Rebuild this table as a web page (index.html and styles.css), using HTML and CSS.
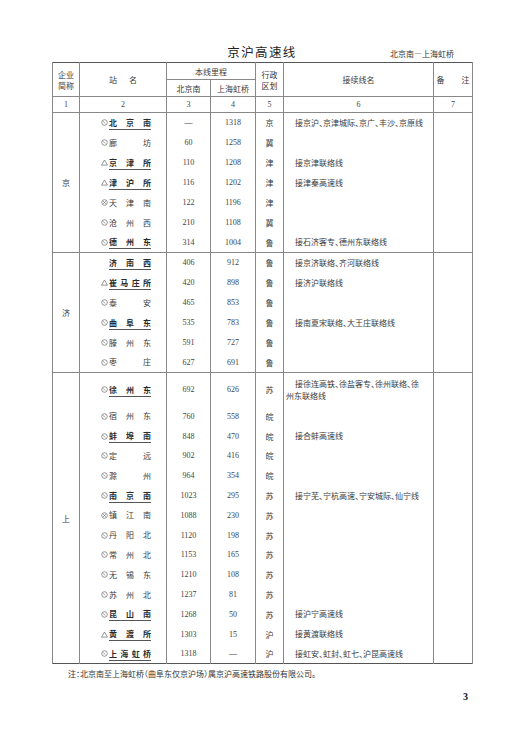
FILE: index.html
```html
<!DOCTYPE html>
<html lang="zh-CN">
<head>
<meta charset="utf-8">
<title>京沪高速线</title>
<link rel="stylesheet" href="styles.css">
</head>
<body>
<svg class="defs" width="0" height="0" aria-hidden="true">
  <symbol id="cs" viewBox="0 0 8 8"><circle cx="4" cy="4" r="3.2" fill="none" stroke="#555" stroke-width=".7"/><path d="M2.3 2.6 L4.7 5.1" stroke="#555" stroke-width=".7" fill="none"/></symbol>
  <symbol id="cx" viewBox="0 0 8 8"><circle cx="4" cy="4" r="3.2" fill="none" stroke="#555" stroke-width=".7"/><path d="M2.4 2.4 L5.6 5.6 M5.6 2.4 L2.4 5.6" stroke="#555" stroke-width=".6" fill="none"/></symbol>
  <symbol id="tr" viewBox="0 0 8 8"><path d="M4 1.2 L7.4 7 H0.6 Z" fill="none" stroke="#555" stroke-width=".7"/></symbol>
</svg>
<div class="page">
  <div class="head">
    <h1 class="title">京沪高速线</h1>
    <div class="sub">北京南—上海虹桥</div>
  </div>
  <table class="tt">
    <colgroup>
      <col class="c1"><col class="c2"><col class="c3"><col class="c4"><col class="c5"><col class="c6"><col class="c7">
    </colgroup>
    <thead>
      <tr class="h1">
        <th rowspan="2" class="two">企业<br>简称</th>
        <th rowspan="2"><span class="zh">站</span>名</th>
        <th colspan="2">本线里程</th>
        <th rowspan="2" class="two">行政<br>区划</th>
        <th rowspan="2">接续线名</th>
        <th rowspan="2"><span class="bz">备</span>注</th>
      </tr>
      <tr class="h2"><th>北京南</th><th>上海虹桥</th></tr>
      <tr class="h3"><td class="n">1</td><td class="n">2</td><td class="n">3</td><td class="n">4</td><td class="n">5</td><td class="n">6</td><td class="n">7</td></tr>
    </thead>
    <tbody class="grp">
      <tr>
        <td rowspan="7" class="co">京</td>
        <td><div class="sw"><svg class="sym"><use href="#cs"/></svg><span class="nm b"><i>北</i><i>京</i><i>南</i></span></div></td>
        <td class="n">—</td><td class="n">1318</td><td class="pr">京</td>
        <td class="ln">接京沪、京津城际、京广、丰沙、京原线</td>
        <td rowspan="7"></td>
      </tr>
      <tr><td><div class="sw"><svg class="sym"><use href="#cs"/></svg><span class="nm"><i>廊</i><i>坊</i></span></div></td><td class="n">60</td><td class="n">1258</td><td class="pr">冀</td><td class="ln"></td></tr>
      <tr><td><div class="sw"><svg class="sym"><use href="#tr"/></svg><span class="nm b"><i>京</i><i>津</i><i>所</i></span></div></td><td class="n">110</td><td class="n">1208</td><td class="pr">津</td><td class="ln">接京津联络线</td></tr>
      <tr><td><div class="sw"><svg class="sym"><use href="#tr"/></svg><span class="nm b"><i>津</i><i>沪</i><i>所</i></span></div></td><td class="n">116</td><td class="n">1202</td><td class="pr">津</td><td class="ln">接津秦高速线</td></tr>
      <tr><td><div class="sw"><svg class="sym"><use href="#cx"/></svg><span class="nm"><i>天</i><i>津</i><i>南</i></span></div></td><td class="n">122</td><td class="n">1196</td><td class="pr">津</td><td class="ln"></td></tr>
      <tr><td><div class="sw"><svg class="sym"><use href="#cs"/></svg><span class="nm"><i>沧</i><i>州</i><i>西</i></span></div></td><td class="n">210</td><td class="n">1108</td><td class="pr">冀</td><td class="ln"></td></tr>
      <tr><td><div class="sw"><svg class="sym"><use href="#cs"/></svg><span class="nm b"><i>德</i><i>州</i><i>东</i></span></div></td><td class="n">314</td><td class="n">1004</td><td class="pr">鲁</td><td class="ln">接石济客专、德州东联络线</td></tr>
    </tbody>
    <tbody class="grp">
      <tr>
        <td rowspan="6" class="co">济</td>
        <td><div class="sw"><span class="sym"></span><span class="nm b"><i>济</i><i>南</i><i>西</i></span></div></td>
        <td class="n">406</td><td class="n">912</td><td class="pr">鲁</td>
        <td class="ln">接京济联络、齐河联络线</td>
        <td rowspan="6"></td>
      </tr>
      <tr><td><div class="sw"><svg class="sym"><use href="#tr"/></svg><span class="nm b"><i>崔</i><i>马</i><i>庄</i><i>所</i></span></div></td><td class="n">420</td><td class="n">898</td><td class="pr">鲁</td><td class="ln">接济沪联络线</td></tr>
      <tr><td><div class="sw"><svg class="sym"><use href="#cs"/></svg><span class="nm"><i>泰</i><i>安</i></span></div></td><td class="n">465</td><td class="n">853</td><td class="pr">鲁</td><td class="ln"></td></tr>
      <tr><td><div class="sw"><svg class="sym"><use href="#cs"/></svg><span class="nm b"><i>曲</i><i>阜</i><i>东</i></span></div></td><td class="n">535</td><td class="n">783</td><td class="pr">鲁</td><td class="ln">接南夏宋联络、大王庄联络线</td></tr>
      <tr><td><div class="sw"><svg class="sym"><use href="#cs"/></svg><span class="nm"><i>滕</i><i>州</i><i>东</i></span></div></td><td class="n">591</td><td class="n">727</td><td class="pr">鲁</td><td class="ln"></td></tr>
      <tr><td><div class="sw"><svg class="sym"><use href="#cs"/></svg><span class="nm"><i>枣</i><i>庄</i></span></div></td><td class="n">627</td><td class="n">691</td><td class="pr">鲁</td><td class="ln"></td></tr>
    </tbody>
    <tbody class="grp g3">
      <tr class="tall">
        <td rowspan="14" class="co">上</td>
        <td><div class="sw"><svg class="sym"><use href="#cs"/></svg><span class="nm b"><i>徐</i><i>州</i><i>东</i></span></div></td>
        <td class="n">692</td><td class="n">626</td><td class="pr">苏</td>
        <td class="ln">接徐连高铁、徐盐客专、徐州联络、徐<br>州东联络线</td>
        <td rowspan="14"></td>
      </tr>
      <tr><td><div class="sw"><svg class="sym"><use href="#cs"/></svg><span class="nm"><i>宿</i><i>州</i><i>东</i></span></div></td><td class="n">760</td><td class="n">558</td><td class="pr">皖</td><td class="ln"></td></tr>
      <tr><td><div class="sw"><svg class="sym"><use href="#cs"/></svg><span class="nm b"><i>蚌</i><i>埠</i><i>南</i></span></div></td><td class="n">848</td><td class="n">470</td><td class="pr">皖</td><td class="ln">接合蚌高速线</td></tr>
      <tr><td><div class="sw"><svg class="sym"><use href="#cs"/></svg><span class="nm"><i>定</i><i>远</i></span></div></td><td class="n">902</td><td class="n">416</td><td class="pr">皖</td><td class="ln"></td></tr>
      <tr><td><div class="sw"><svg class="sym"><use href="#cs"/></svg><span class="nm"><i>滁</i><i>州</i></span></div></td><td class="n">964</td><td class="n">354</td><td class="pr">皖</td><td class="ln"></td></tr>
      <tr><td><div class="sw"><svg class="sym"><use href="#cs"/></svg><span class="nm b"><i>南</i><i>京</i><i>南</i></span></div></td><td class="n">1023</td><td class="n">295</td><td class="pr">苏</td><td class="ln">接宁芜、宁杭高速、宁安城际、仙宁线</td></tr>
      <tr><td><div class="sw"><svg class="sym"><use href="#cx"/></svg><span class="nm"><i>镇</i><i>江</i><i>南</i></span></div></td><td class="n">1088</td><td class="n">230</td><td class="pr">苏</td><td class="ln"></td></tr>
      <tr><td><div class="sw"><svg class="sym"><use href="#cs"/></svg><span class="nm"><i>丹</i><i>阳</i><i>北</i></span></div></td><td class="n">1120</td><td class="n">198</td><td class="pr">苏</td><td class="ln"></td></tr>
      <tr><td><div class="sw"><svg class="sym"><use href="#cs"/></svg><span class="nm"><i>常</i><i>州</i><i>北</i></span></div></td><td class="n">1153</td><td class="n">165</td><td class="pr">苏</td><td class="ln"></td></tr>
      <tr><td><div class="sw"><svg class="sym"><use href="#cs"/></svg><span class="nm"><i>无</i><i>锡</i><i>东</i></span></div></td><td class="n">1210</td><td class="n">108</td><td class="pr">苏</td><td class="ln"></td></tr>
      <tr><td><div class="sw"><svg class="sym"><use href="#cs"/></svg><span class="nm"><i>苏</i><i>州</i><i>北</i></span></div></td><td class="n">1237</td><td class="n">81</td><td class="pr">苏</td><td class="ln"></td></tr>
      <tr><td><div class="sw"><svg class="sym"><use href="#cs"/></svg><span class="nm b"><i>昆</i><i>山</i><i>南</i></span></div></td><td class="n">1268</td><td class="n">50</td><td class="pr">苏</td><td class="ln">接沪宁高速线</td></tr>
      <tr><td><div class="sw"><svg class="sym"><use href="#tr"/></svg><span class="nm b"><i>黄</i><i>渡</i><i>所</i></span></div></td><td class="n">1303</td><td class="n">15</td><td class="pr">沪</td><td class="ln">接黄渡联络线</td></tr>
      <tr><td><div class="sw"><svg class="sym"><use href="#cs"/></svg><span class="nm b"><i>上</i><i>海</i><i>虹</i><i>桥</i></span></div></td><td class="n">1318</td><td class="n">—</td><td class="pr">沪</td><td class="ln">接虹安、虹封、虹七、沪昆高速线</td></tr>
    </tbody>
  </table>
  <p class="note">注：北京南至上海虹桥（曲阜东仅京沪场）属京沪高速铁路股份有限公司。</p>
  <div class="pg">3</div>
</div>
</body>
</html>
```

FILE: styles.css
```css
html, body {
  margin: 0;
  background: #fff;
}
body {
  font-family: "Noto Sans CJK SC", "Noto Sans CJK JP", sans-serif;
  color: #333;
}
.defs {
  position: absolute;
  width: 0;
  height: 0;
  overflow: hidden;
}
.page {
  width: 420px;
  padding: 43px 0 0 52px;
}
.head {
  display: grid;
  grid-template-columns: 1fr auto 1fr;
  align-items: end;
  height: 19px;
}
.title {
  grid-column: 2;
  margin: 0 0 2px;
  font-size: 12.5px;
  font-weight: normal;
  letter-spacing: 1.4px;
  line-height: 16px;
  color: #222;
}
.sub {
  grid-column: 3;
  justify-self: end;
  margin: 0 18px 3px 0;
  font-size: 8px;
  line-height: 10px;
  color: #333;
}
.tt {
  width: 420px;
  border-collapse: collapse;
  table-layout: fixed;
  border: 1.5px solid #555;
}
.c1 { width: 27px; }
.c2 { width: 87px; }
.c3 { width: 44px; }
.c4 { width: 45px; }
.c5 { width: 28px; }
.c6 { width: 150px; }
.c7 { width: 39px; }
.tt th, .tt td {
  padding: 0;
  border-left: 1px solid #888;
  border-right: 1px solid #888;
  font-size: 8px;
  font-weight: normal;
  line-height: 11px;
  text-align: center;
  vertical-align: middle;
  color: #3a3a3a;
}
.tt thead th, .tt thead td {
  border-bottom: 1px solid #888;
}
.h1 { height: 17px; }
.h2 { height: 17px; }
.h3 { height: 16px; }
.zh { margin-right: 12px; }
.bz { margin-right: 17px; }
.grp {
  border-top: 1px solid #888;
}
.grp tr { height: 20px; }
.g3 tr { height: 19.8px; }
.g3 tr.tall { height: 34px; }
.tt .n {
  font-family: "Liberation Serif", "DejaVu Serif", serif;
  font-size: 8px;
  color: #444;
}
.sw {
  display: flex;
  align-items: center;
  padding-left: 21px;
}
.sym {
  width: 7px;
  height: 7px;
  margin-right: 1px;
  flex: none;
}
.nm {
  display: flex;
  justify-content: space-between;
  width: 42px;
  line-height: 10px;
}
.nm i {
  font-style: normal;
}
.nm.b {
  font-weight: bold;
  color: #2a2a2a;
  padding-bottom: 1px;
  margin-bottom: -2px;
  border-bottom: 1px solid #555;
}
.tt .ln {
  text-align: left;
  padding-left: 2px;
  text-indent: 9px;
  line-height: 12px;
  font-feature-settings: "halt";
}
.note {
  margin: 4px 0 0 16px;
  font-size: 8px;
  line-height: 12px;
  font-feature-settings: "halt";
  color: #333;
}
.pg {
  margin-top: 11px;
  padding-right: 4px;
  text-align: right;
  font-family: "Liberation Serif", "DejaVu Serif", serif;
  font-size: 10px;
  font-weight: bold;
  line-height: 12px;
  color: #111;
}
```
